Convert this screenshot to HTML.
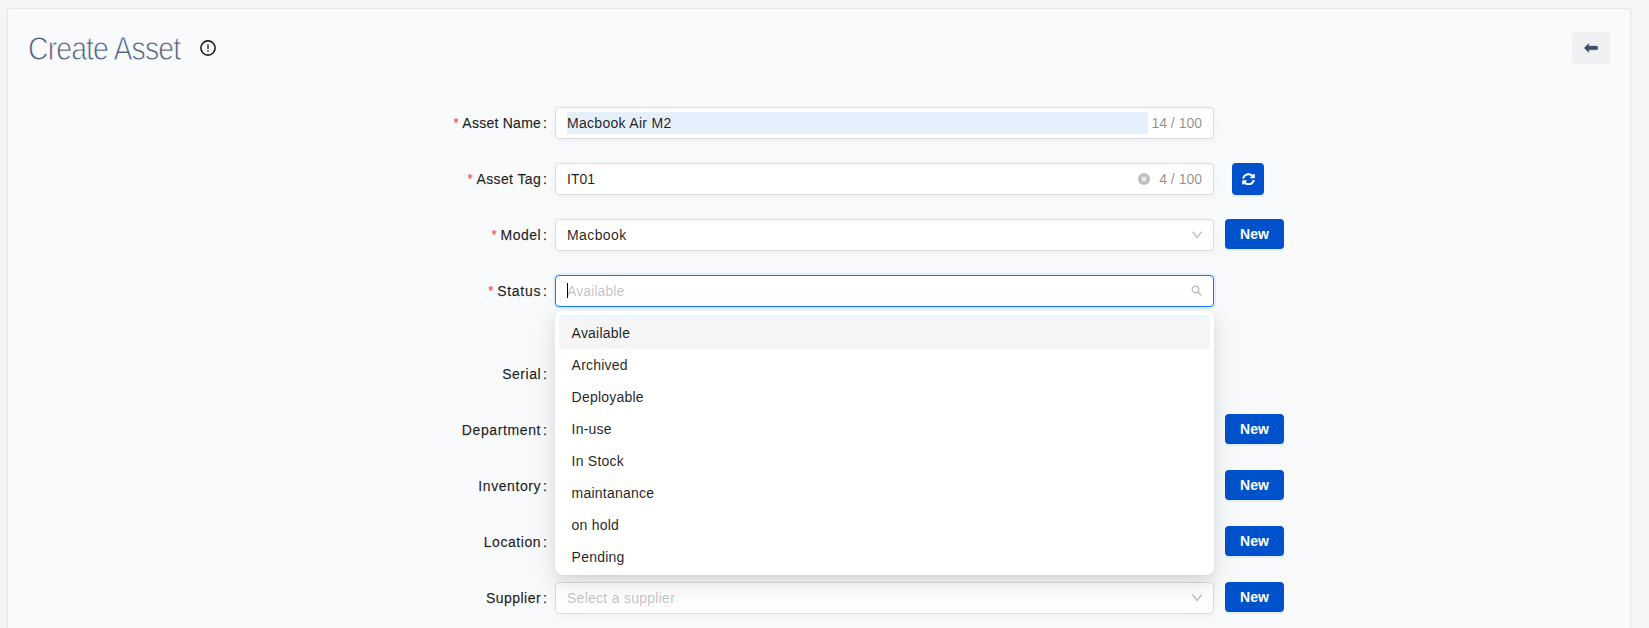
<!DOCTYPE html>
<html>
<head>
<meta charset="utf-8">
<style>
*{box-sizing:border-box;}
html,body{margin:0;padding:0;}
body{width:1649px;height:628px;overflow:hidden;background:#f4f5f7;font-family:"Liberation Sans",sans-serif;font-size:14px;color:rgba(0,0,0,0.88);position:relative;}
.card{position:absolute;left:7px;top:8px;width:1624px;height:700px;background:#f9fafb;border:1px solid #e7e8eb;border-radius:3px;box-shadow:0 1px 3px rgba(0,0,0,0.05);}
.title{position:absolute;left:28px;top:31px;font-size:33px;line-height:36px;color:#4a5d7e;white-space:nowrap;transform-origin:0 0;transform:scaleX(0.86);letter-spacing:-1px;-webkit-text-stroke:0.9px #f9fafb;paint-order:normal;}
.info{position:absolute;left:200px;top:40px;width:16px;height:16px;}
.back{position:absolute;left:1572px;top:32px;width:38px;height:32px;background:#eff0f2;border-radius:5px;}
.lbl{position:absolute;right:1102px;height:32px;line-height:32px;white-space:nowrap;color:rgba(0,0,0,0.88);-webkit-text-stroke:0.25px rgba(0,0,0,0.6);letter-spacing:0.3px;}
.lbl .req{color:#ff4d4f;font-family:"Liberation Sans";font-size:12px;margin-right:4px;-webkit-text-stroke:0.25px #ff4d4f;position:relative;top:-1.5px;letter-spacing:0;}
.lbl .colon{margin-left:2px;letter-spacing:0;}
.inp{position:absolute;left:555px;width:659px;height:32px;background:#fff;border:1px solid #dcdcdc;border-radius:4px;box-shadow:0 2px 10px rgba(0,0,0,0.045);}
.inp .val{position:absolute;left:11px;top:4px;height:22px;line-height:22px;white-space:nowrap;}
.inp .cnt{position:absolute;right:11px;top:4px;height:22px;line-height:22px;color:rgba(0,0,0,0.45);white-space:nowrap;}
.ph{color:rgba(0,0,0,0.25);}
.btn{position:absolute;left:1225px;width:59px;height:30px;background:#0052cc;border-radius:4px;color:#fff;font-weight:bold;text-align:center;line-height:30px;box-shadow:0 2px 0 rgba(5,145,255,0.1);}
.rbtn{position:absolute;left:1232px;top:163px;width:32px;height:32px;background:#0052cc;border-radius:4px;box-shadow:0 2px 0 rgba(5,145,255,0.1);}
.dd{position:absolute;left:555px;top:311px;width:659px;height:264px;background:#fff;border-radius:8px;padding:4px 4px 2px;box-shadow:0 6px 16px 0 rgba(0,0,0,0.08),0 3px 6px -4px rgba(0,0,0,0.12),0 9px 28px 8px rgba(0,0,0,0.05);}
.opt{height:32px;line-height:32px;padding:0 12px 0 12.6px;border-radius:4px;white-space:nowrap;letter-spacing:0.22px;}
.opt.act{background:rgba(0,0,0,0.04);}
</style>
</head>
<body>
<div class="card"></div>
<div class="title">Create Asset</div>
<svg class="info" viewBox="0 0 16 16"><circle cx="8" cy="8" r="7.1" fill="none" stroke="#1f1f1f" stroke-width="1.65"/><rect x="7.3" y="4.3" width="1.4" height="4.8" fill="#222"/><rect x="7.3" y="10.2" width="1.4" height="1.4" fill="#222"/></svg>
<div class="back"><svg style="position:absolute;left:12px;top:10px" width="14" height="12" viewBox="0 0 14 12"><path d="M0.2 5.95 L4.8 1.5 L4.8 4.1 L12.1 4.1 A1.85 1.85 0 0 1 12.1 7.8 L4.8 7.8 L4.8 10.4 Z" fill="#3d4f6b" stroke="#3d4f6b" stroke-width="0.4" stroke-linejoin="round"/></svg></div>

<div class="lbl" style="top:107px"><span class="req">*</span><span style="letter-spacing:0.25px">Asset Name</span><span class="colon">:</span></div>
<div class="inp" style="top:107px"><div style="position:absolute;left:11px;top:4px;width:581px;height:22px;background:#e6effc"></div><div class="val" style="letter-spacing:0.3px">Macbook Air M2</div><div class="cnt">14 / 100</div></div>

<div class="lbl" style="top:163px"><span class="req">*</span><span style="letter-spacing:0.38px">Asset Tag</span><span class="colon">:</span></div>
<div class="inp" style="top:163px"><div class="val">IT01</div>
<svg style="position:absolute;left:582px;top:9px" width="12" height="12" viewBox="0 0 12 12"><circle cx="6" cy="6" r="6" fill="#bfbfbf"/><path d="M4 4 L8 8 M8 4 L4 8" stroke="#fff" stroke-width="1.3"/></svg>
<div class="cnt">4 / 100</div></div>
<div class="rbtn"><svg style="position:absolute;left:10px;top:9.8px" width="13" height="12.5" preserveAspectRatio="none" viewBox="0 0 512 512"><path fill="#fff" d="M370.72 133.28C339.458 104.008 298.888 87.962 255.848 88c-77.458.068-144.328 53.178-162.791 126.85-1.344 5.363-6.122 9.15-11.651 9.15H24.103c-7.498 0-13.194-6.807-11.807-14.176C33.933 94.924 134.813 8 256 8c66.448 0 126.791 26.136 171.315 68.685L463.03 40.97C478.149 25.851 504 36.559 504 57.941V192c0 13.255-10.745 24-24 24H345.941c-21.382 0-32.090-25.851-16.971-40.971l41.750-41.749zM32 296h134.059c21.382 0 32.090 25.851 16.971 40.971l-41.750 41.750c31.262 29.273 71.835 45.319 114.876 45.280 77.418-.070 144.315-53.144 162.787-126.849 1.344-5.363 6.122-9.150 11.651-9.150h57.304c7.498 0 13.194 6.807 11.807 14.176C478.067 417.076 377.187 504 256 504c-66.448 0-126.791-26.136-171.315-68.685L48.970 471.030C33.851 486.149 8 475.441 8 454.059V320c0-13.255 10.745-24 24-24z"/></svg></div>

<div class="lbl" style="top:219px"><span class="req">*</span><span style="letter-spacing:0.5px">Model</span><span class="colon">:</span></div>
<div class="inp" style="top:219px"><div class="val" style="letter-spacing:0.4px">Macbook</div>
<svg style="position:absolute;left:636px;top:11px" width="12" height="9" viewBox="0 0 12 9"><path d="M0.7 0.7 L5.15 6.6 L9.6 0.7" fill="none" stroke="#b3b3b3" stroke-width="1.15"/></svg></div>
<div class="btn" style="top:219px">New</div>

<div class="lbl" style="top:275px"><span class="req">*</span><span style="letter-spacing:0.7px">Status</span><span class="colon">:</span></div>
<div class="inp" style="top:275px;border-color:#1677ff;box-shadow:0 0 0 2px rgba(5,145,255,0.1)"><div class="val ph" style="letter-spacing:0.1px">Available</div><div style="position:absolute;left:11px;top:7px;width:1px;height:15px;background:#000"></div>
<svg style="position:absolute;left:634.7px;top:8.7px" width="12" height="12" viewBox="0 0 12 12"><circle cx="4.5" cy="4.5" r="3.35" fill="none" stroke="#b5b5b5" stroke-width="1.1"/><path d="M7 7 L10.3 10.3" stroke="#b5b5b5" stroke-width="1.2"/></svg></div>

<div class="lbl" style="top:358px"><span style="letter-spacing:0.52px">Serial</span><span class="colon">:</span></div>
<div class="lbl" style="top:414px"><span style="letter-spacing:0.61px">Department</span><span class="colon">:</span></div>
<div class="btn" style="top:414px">New</div>
<div class="lbl" style="top:470px"><span style="letter-spacing:0.58px">Inventory</span><span class="colon">:</span></div>
<div class="btn" style="top:470px">New</div>
<div class="lbl" style="top:526px"><span style="letter-spacing:0.55px">Location</span><span class="colon">:</span></div>
<div class="btn" style="top:526px">New</div>
<div class="lbl" style="top:582px"><span style="letter-spacing:0.475px">Supplier</span><span class="colon">:</span></div>
<div class="inp" style="top:582px"><div class="val ph" style="letter-spacing:0.27px">Select a supplier</div>
<svg style="position:absolute;left:636px;top:11px" width="12" height="9" viewBox="0 0 12 9"><path d="M0.7 0.7 L5.15 6.6 L9.6 0.7" fill="none" stroke="#b3b3b3" stroke-width="1.15"/></svg></div>
<div class="btn" style="top:582px">New</div>

<div class="dd">
<div style="height:2px;margin:0 0 0 0;background:#e6f4ff;border-radius:4px 4px 0 0"></div><div class="opt act">Available</div>
<div class="opt">Archived</div>
<div class="opt">Deployable</div>
<div class="opt">In-use</div>
<div class="opt">In Stock</div>
<div class="opt">maintanance</div>
<div class="opt">on hold</div>
<div class="opt">Pending</div>
</div>
</body>
</html>
